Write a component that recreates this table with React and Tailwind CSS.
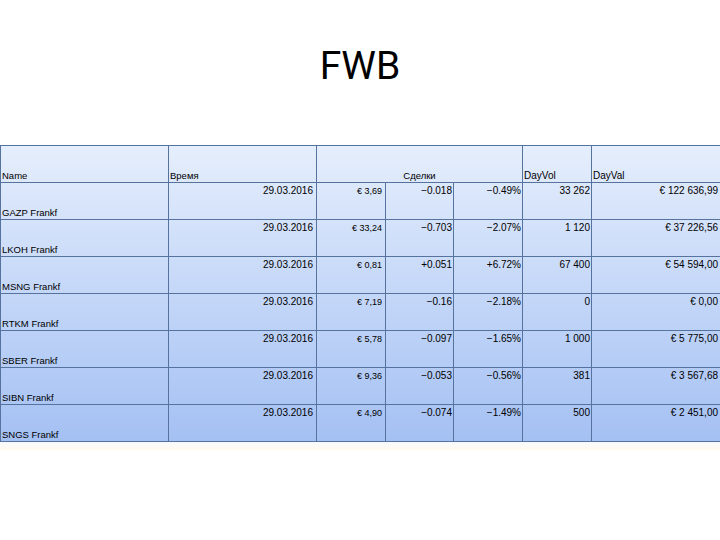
import React from "react";

const rows = [
  ["GAZP Frankf", "€ 3,69", "−0.018", "−0.49%", "33 262", "€ 122 636,99"],
  ["LKOH Frankf", "€ 33,24", "−0.703", "−2.07%", "1 120", "€ 37 226,56"],
  ["MSNG Frankf", "€ 0,81", "+0.051", "+6.72%", "67 400", "€ 54 594,00"],
  ["RTKM Frankf", "€ 7,19", "−0.16", "−2.18%", "0", "€ 0,00"],
  ["SBER Frankf", "€ 5,78", "−0.097", "−1.65%", "1 000", "€ 5 775,00"],
  ["SIBN Frankf", "€ 9,36", "−0.053", "−0.56%", "381", "€ 3 567,68"],
  ["SNGS Frankf", "€ 4,90", "−0.074", "−1.49%", "500", "€ 2 451,00"],
];

const grid = "grid grid-cols-[168px_148px_69px_68px_69px_69px_1fr]";

export default function App() {
  return (
    <div className="w-[720px] h-[540px] bg-white overflow-hidden text-black" style={{ fontFamily: '"Liberation Sans", Arial, sans-serif' }}>
      <div className="pt-[47px] text-center text-[39px] leading-[39px]" style={{ fontFamily: 'Roboto, "Liberation Sans", sans-serif' }}>
        FWB
      </div>
      <div className="mt-[59px] w-[722px] border-t border-l border-[#56739f] bg-linear-to-b from-[#e5eefc] to-[#a4c0f3] text-[10px] leading-[12px]">
        <div className={`${grid} h-[37px] border-b border-[#56739f]`}>
          <div className="border-r border-[#56739f] flex items-end pl-[1px] text-[9.5px]">Name</div>
          <div className="border-r border-[#56739f] flex items-end pl-[1px] text-[9.5px]">Время</div>
          <div className="col-span-3 border-r border-[#56739f] flex items-end justify-center text-[9.5px]">Сделки</div>
          <div className="border-r border-[#56739f] flex items-end pl-[1px]">DayVol</div>
          <div className="flex items-end pl-[1px]">DayVal</div>
        </div>
        {rows.map((r) => (
          <div key={r[0]} className={`${grid} h-[37px] border-b border-[#56739f]`}>
            <div className="border-r border-[#56739f] flex items-end pl-[1px] text-[9.5px]">{r[0]}</div>
            <div className="border-r border-[#56739f] text-right pr-[3px] pt-[2px]">29.03.2016</div>
            <div className="border-r border-[#56739f] text-right pr-[3px] pt-[2px] text-[9px]">{r[1]}</div>
            <div className="border-r border-[#56739f] text-right pr-[1px] pt-[2px]">{r[2]}</div>
            <div className="border-r border-[#56739f] text-right pr-[1px] pt-[2px]">{r[3]}</div>
            <div className="border-r border-[#56739f] text-right pr-[1px] pt-[2px]">{r[4]}</div>
            <div className="text-right pr-[4px] pt-[2px]">{r[5]}</div>
          </div>
        ))}
      </div>
      <div className="h-[8px] w-[720px] bg-linear-to-b from-[#f6faff] to-[#fffaec]" />
    </div>
  );
}
